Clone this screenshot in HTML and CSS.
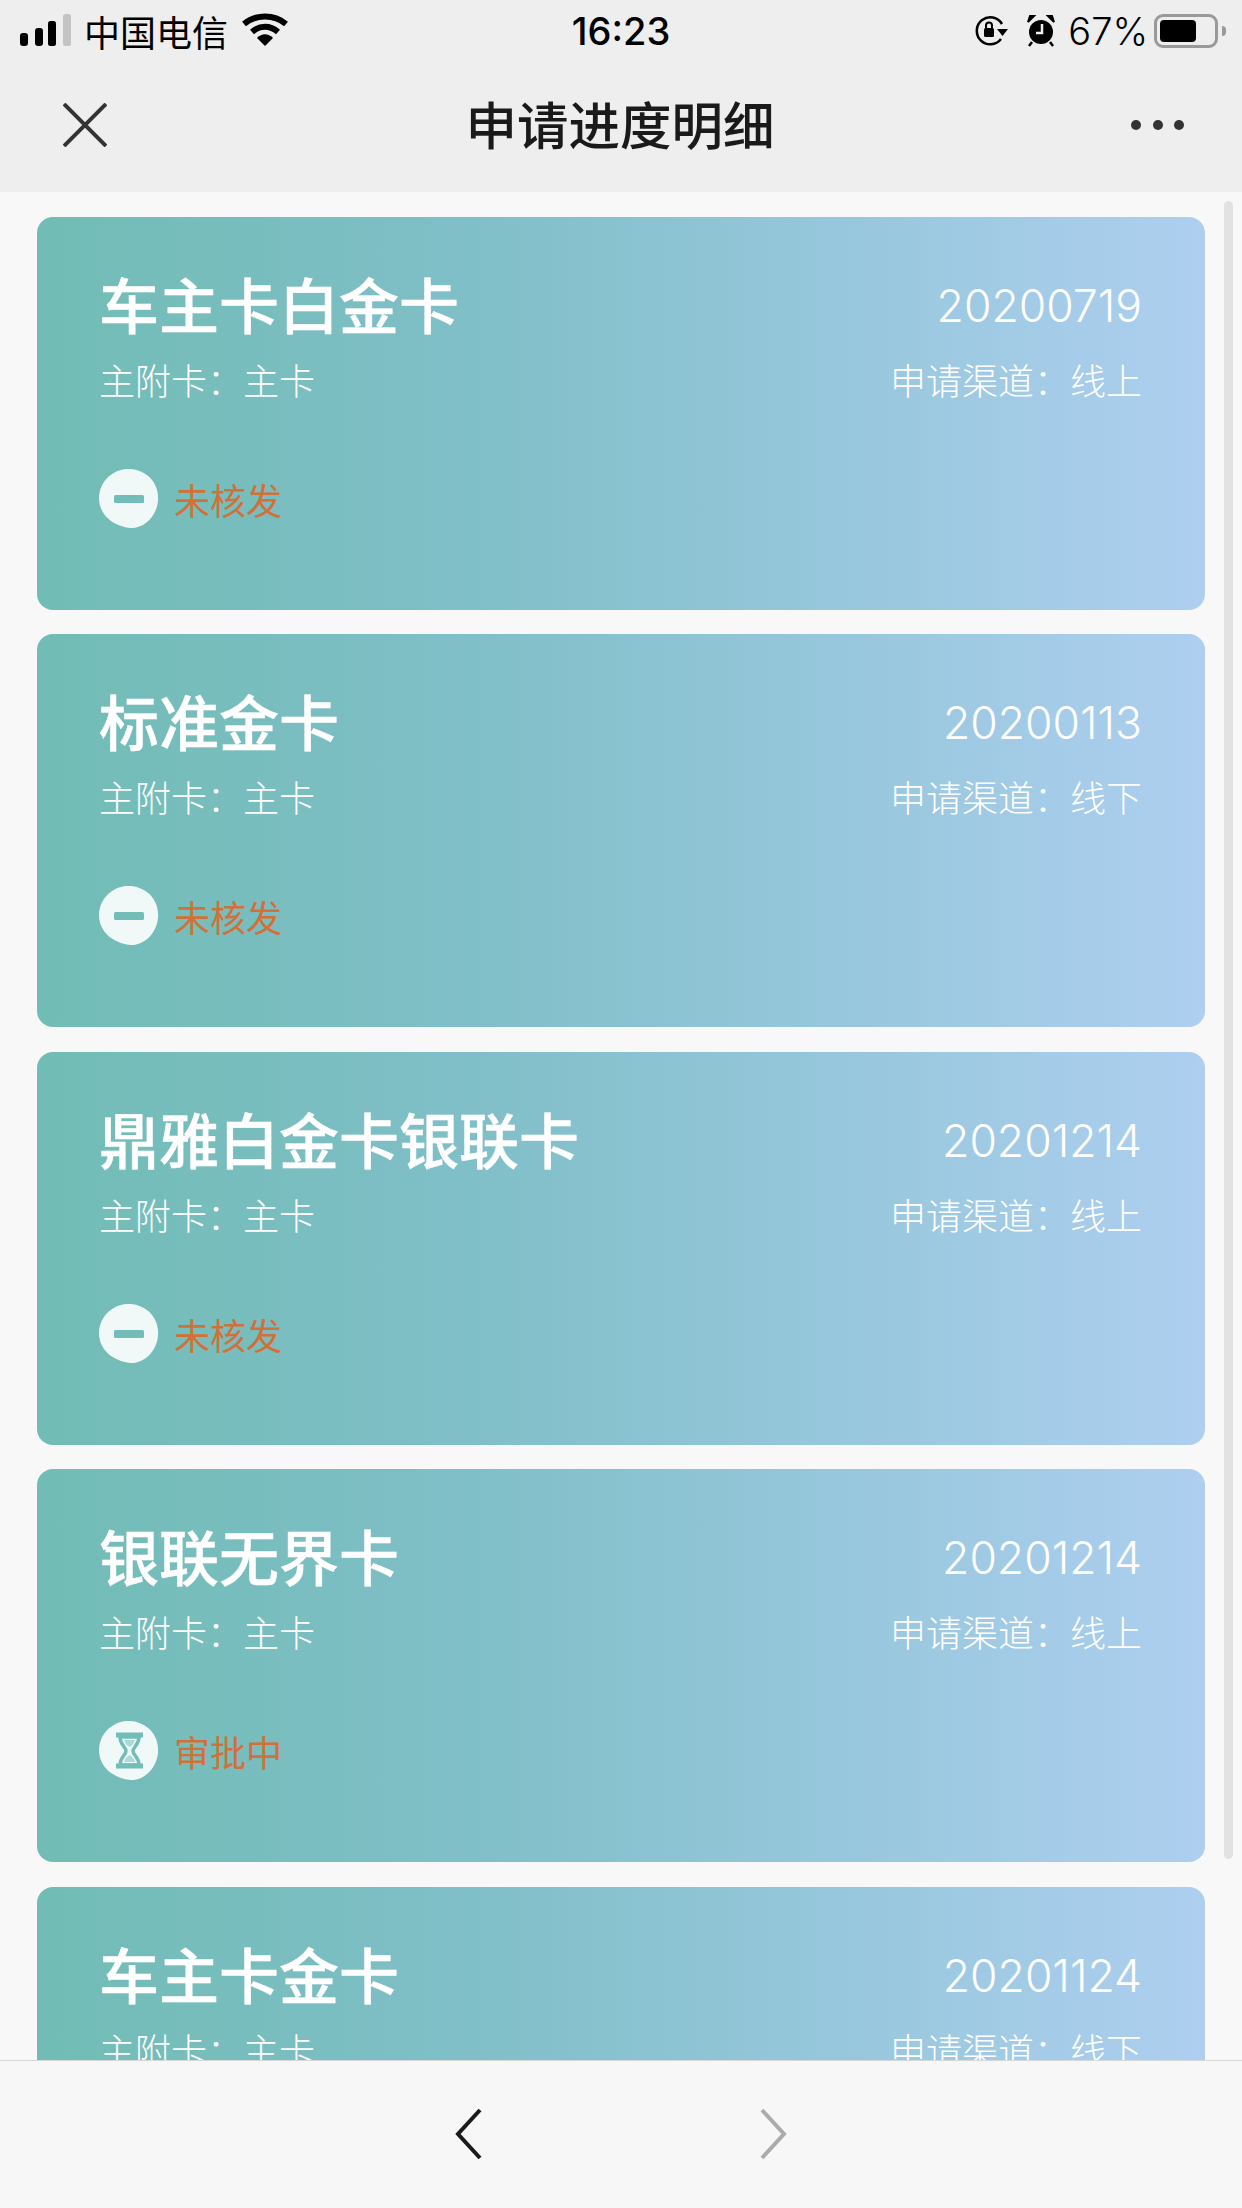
FILE: index.html
```html
<!DOCTYPE html>
<html lang="zh-CN">
<head>
	<meta charset="UTF-8">
	<title>申请进度明细</title>
	<link rel="stylesheet" href="styles.css">
</head>
<body>
	<svg class="defs" width="0" height="0">
		<symbol id="blob" viewBox="0 0 60 60">
			<path d="M31 0C48 1 60 14 59 31C58 48 44 60 31 59C14 57 0 46 0 29C0 13 14-1 31 0Z" fill="#f0f9f8"/>
		</symbol>
	</svg>
	<div class="top">
		<div class="status">
			<div class="status-left">
				<svg class="signal" width="52" height="34" viewBox="0 0 52 34">
					<rect x="1" y="19" width="8" height="13" rx="3"/>
					<rect x="16" y="14" width="8" height="18" rx="3"/>
					<rect x="29" y="7" width="8" height="25" rx="2.5"/>
					<rect x="44" y="0" width="8" height="32" rx="2.5" fill="#c4c4c4"/>
				</svg>
				<span class="carrier">中国电信</span>
				<svg class="wifi" width="46" height="34" viewBox="0 0 46 34">
					<path d="M2 11C14 1 32 1 44 11" fill="none" stroke="#000" stroke-width="6"/>
					<path d="M10 19C18 12 28 12 36 19" fill="none" stroke="#000" stroke-width="6"/>
					<path d="M15 25C20 20 26 20 31 25L23 33Z"/>
				</svg>
			</div>
			<div class="time">16:23</div>
			<div class="status-right">
				<svg class="rotlock" width="33" height="32" viewBox="0 0 33 32">
					<path d="M26 24A13.500 13.500 0 1 1 27 9" fill="none" stroke="#000" stroke-width="2.500"/>
					<path d="M22 14H33L27.500 21Z"/>
					<rect x="9" y="13" width="10" height="9" rx="1.500"/>
					<path d="M11 13V10.500A3 3 0 0 1 17 10.500V13" fill="none" stroke="#000" stroke-width="2"/>
				</svg>
				<svg class="alarm" width="28" height="32" viewBox="0 0 28 32">
					<circle cx="14" cy="17" r="12"/>
					<path d="M1 7L7 1L3 1Z M27 7L21 1L25 1Z" stroke="#000" stroke-width="2"/>
					<path d="M5 27L2 31M23 27L26 31" stroke="#000" stroke-width="2.500"/>
					<path d="M15 9V18H9" fill="none" stroke="#eee" stroke-width="2.500"/>
				</svg>
				<span class="pct">67%</span>
				<div class="battery"><div class="battery-fill"></div></div>
				<div class="battery-nub"></div>
			</div>
		</div>
		<div class="nav">
			<svg class="nav-close" width="44" height="44" viewBox="0 0 44 44">
				<path d="M1 1L43 43M43 1L1 43" stroke="#333" stroke-width="4" fill="none"/>
			</svg>
			<h1 class="nav-title">申请进度明细</h1>
			<div class="nav-more"><i></i><i></i><i></i></div>
		</div>
	</div>

	<div class="main">
		<div class="card">
			<div class="card-row card-head">
				<h2 class="card-name">车主卡白金卡</h2>
				<span class="card-date">20200719</span>
			</div>
			<div class="card-row card-sub">
				<span>主附卡：主卡</span>
				<span>申请渠道：线上</span>
			</div>
			<div class="card-state">
				<svg class="state-ico" width="60" height="60" viewBox="0 0 60 60">
					<use href="#blob"/>
					<rect x="15" y="26" width="30" height="8" rx="1.500" fill="#72bdb8"/>
				</svg>
				<span>未核发</span>
			</div>
		</div>
		<div class="card">
			<div class="card-row card-head">
				<h2 class="card-name">标准金卡</h2>
				<span class="card-date">20200113</span>
			</div>
			<div class="card-row card-sub">
				<span>主附卡：主卡</span>
				<span>申请渠道：线下</span>
			</div>
			<div class="card-state">
				<svg class="state-ico" width="60" height="60" viewBox="0 0 60 60">
					<use href="#blob"/>
					<rect x="15" y="26" width="30" height="8" rx="1.500" fill="#72bdb8"/>
				</svg>
				<span>未核发</span>
			</div>
		</div>
		<div class="card">
			<div class="card-row card-head">
				<h2 class="card-name">鼎雅白金卡银联卡</h2>
				<span class="card-date">20201214</span>
			</div>
			<div class="card-row card-sub">
				<span>主附卡：主卡</span>
				<span>申请渠道：线上</span>
			</div>
			<div class="card-state">
				<svg class="state-ico" width="60" height="60" viewBox="0 0 60 60">
					<use href="#blob"/>
					<rect x="15" y="26" width="30" height="8" rx="1.500" fill="#72bdb8"/>
				</svg>
				<span>未核发</span>
			</div>
		</div>
		<div class="card">
			<div class="card-row card-head">
				<h2 class="card-name">银联无界卡</h2>
				<span class="card-date">20201214</span>
			</div>
			<div class="card-row card-sub">
				<span>主附卡：主卡</span>
				<span>申请渠道：线上</span>
			</div>
			<div class="card-state">
				<svg class="state-ico" width="60" height="60" viewBox="0 0 60 60">
					<use href="#blob"/>
					<path d="M17 14H44M17 45H44" stroke="#72bdb8" stroke-width="5" fill="none"/>
					<path d="M21 16C21 24 27 26 27 30C27 34 21 36 21 44H40C40 36 34 34 34 30C34 26 40 24 40 16Z" fill="none" stroke="#72bdb8" stroke-width="3.500"/>
					<path d="M25 41C26 37 29 35 30.500 34C32 35 35 37 36 41Z" fill="#a9dcd8"/>
					<path d="M25 19H36C35 23 32 25 30.500 26C29 25 26 23 25 19Z" fill="#a9dcd8"/>
				</svg>
				<span>审批中</span>
			</div>
		</div>
		<div class="card">
			<div class="card-row card-head">
				<h2 class="card-name">车主卡金卡</h2>
				<span class="card-date">20201124</span>
			</div>
			<div class="card-row card-sub">
				<span>主附卡：主卡</span>
				<span>申请渠道：线下</span>
			</div>
		</div>
		<div class="scrollbar"></div>
	</div>

	<div class="bottom">
		<svg width="28" height="52" viewBox="0 0 28 52">
			<path d="M25 2L3 26L25 50" fill="none" stroke="#1a1a1a" stroke-width="4"/>
		</svg>
		<svg width="28" height="52" viewBox="0 0 28 52">
			<path d="M3 2L25 26L3 50" fill="none" stroke="#ababab" stroke-width="4"/>
		</svg>
	</div>
</body>
</html>
```
FILE: styles.css
```css
* {box-sizing: border-box;}
html, body {margin: 0; padding: 0;}
body {width: 1242px; height: 2208px; overflow: hidden; display: flex; flex-direction: column; background: #f8f8f8; color: #000; font-family: "Noto Sans CJK SC", "Noto Sans", sans-serif;}
h1, h2 {margin: 0; padding: 0;}
.defs {position: absolute;}

.top {height: 192px; flex: none; background: #eeeeee;}
.status {height: 62px; display: grid; grid-template-columns: 1fr auto 1fr; align-items: center;}
.status-left {display: flex; align-items: center; padding-left: 19px;}
.signal {margin-right: 13px; margin-top: -1px;}
.carrier {font-size: 36px; line-height: 62px; width: 144px; margin-right: 14px;}
.wifi {margin-top: -3px;}
.time {font-family: Inter, sans-serif; font-size: 38px; font-weight: 500; line-height: 62px;}
.status-right {display: flex; align-items: center; justify-content: flex-end; padding-right: 16px;}
.rotlock {margin-right: 19px;}
.alarm {margin-right: 13px;}
.pct {font-family: Inter, sans-serif; font-size: 38px; font-weight: 300; line-height: 62px; margin-right: 6px;}
.battery {width: 64px; height: 34px; border: 3px solid #999; border-radius: 9px; padding: 3px 0 3px 3px;}
.battery-fill {width: 36px; height: 22px; background: #000; border-radius: 4px;}
.battery-nub {width: 4px; height: 10px; background: #999; border-radius: 0 4px 4px 0; margin-left: 4px;}

.nav {height: 130px; display: grid; grid-template-columns: 1fr auto 1fr; align-items: center; padding: 0 58px 0 63px;}
.nav-title {font-size: 51.5px; font-weight: 500; line-height: 130px; color: #1a1a1a; margin: -8px 0 0 -7px;}
.nav-close {margin-top: -5px;}
.nav-more {display: flex; justify-content: flex-end; gap: 11.5px; margin-top: -4px;}
.nav-more i {display: block; width: 10px; height: 10px; border-radius: 50%; background: #333;}

.main {flex: 1; overflow: hidden; position: relative; padding: 25px 37px 0;}
.card {height: 393px; margin-bottom: 24.4px; padding: 46px 63px 0 62px; border-radius: 16px; background: linear-gradient(90deg, #71bcb5, #80bfc8 38%, #aecff0); color: #fff;}
.card-row {display: flex; justify-content: space-between; align-items: center;}
.card-head {height: 80px; align-items: flex-start;}
.card-name {font-size: 60px; font-weight: 500; line-height: 80px; -webkit-text-stroke: .5px #fff;}
.card-date {font-family: Inter, sans-serif; font-size: 44.5px; font-weight: 300; line-height: 87px;}
.card-sub {font-size: 36px; font-weight: 300; line-height: 50px; margin-top: 11px;}
.card-state {display: flex; align-items: center; margin-top: 65px; font-size: 36px; line-height: 60px; color: #d2703a;}
.state-ico {margin-right: 15px;}
.scrollbar {position: absolute; top: 9px; right: 9px; width: 9px; height: 1658px; border-radius: 5px; background: #e2e2e2;}

.bottom {height: 148px; flex: none; border-top: 1px solid #d8d8d8; background: #f7f7f7; display: flex; justify-content: center; align-items: center; gap: 276px; padding: 0 0 2px 0;}
```
